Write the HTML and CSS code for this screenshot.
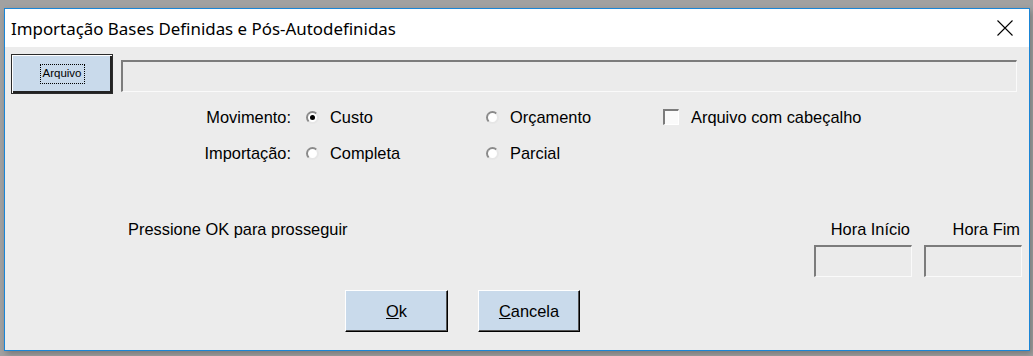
FILE: index.html
```html
<!DOCTYPE html>
<html lang="pt">
<head>
    <meta charset="UTF-8">
    <title>Importação Bases Definidas e Pós-Autodefinidas</title>
    <link rel="stylesheet" href="styles.css">
</head>
<body>
    <div class="window">
        <div class="titlebar">
            <span class="title">Importação Bases Definidas e Pós-Autodefinidas</span>
            <svg class="close" width="16" height="16" viewBox="0 0 16 16">
                <path d="M0.5 0.5 L15.5 15.5 M15.5 0.5 L0.5 15.5" stroke="#000" stroke-width="1.1" fill="none"/>
            </svg>
        </div>

        <div class="content">
            <div class="file-row">
                <button class="btn btn-default"><span class="focus">Arquivo</span></button>
                <div class="field file-path"></div>
            </div>

            <div class="options">
                <span class="label">Movimento:</span>
                <label class="opt"><span class="radio checked"></span>Custo</label>
                <label class="opt"><span class="radio"></span>Orçamento</label>
                <label class="opt"><span class="check"></span>Arquivo com cabeçalho</label>

                <span class="label">Importação:</span>
                <label class="opt"><span class="radio"></span>Completa</label>
                <label class="opt"><span class="radio"></span>Parcial</label>
            </div>

            <div class="status-row">
                <p class="message">Pressione OK para prosseguir</p>
                <div class="times">
                    <div class="time">
                        <span class="time-label">Hora Início</span>
                        <div class="field time-box"></div>
                    </div>
                    <div class="time">
                        <span class="time-label">Hora Fim</span>
                        <div class="field time-box"></div>
                    </div>
                </div>
            </div>

            <div class="actions">
                <button class="btn btn-ok"><u>O</u>k</button>
                <button class="btn btn-cancel"><u>C</u>ancela</button>
            </div>
        </div>
    </div>
</body>
</html>
```

FILE: styles.css
```css
* {
    box-sizing: border-box;
}

body {
    margin: 0;
    height: 356px;
    padding: 8px 0 0 4px;
    background: #a1a1a1;
    font-family: "Liberation Sans", Arial, sans-serif;
    font-size: 16.4px;
    color: #000;
    overflow: hidden;
}

.window {
    width: 1026px;
    height: 343px;
    border: 1px solid #1a85d6;
    background: #ececec;
    display: flex;
    flex-direction: column;
    box-shadow: 2px 3px 6px rgba(0, 0, 0, 0.25);
}

.titlebar {
    height: 38px;
    background: #fff;
    display: flex;
    align-items: center;
    justify-content: space-between;
    padding: 0 16px 0 6px;
}

.title {
    font-family: "Noto Sans", sans-serif;
    font-size: 16.9px;
    margin-top: 1px;
}

.close {
    display: block;
    margin-top: -1px;
}

.content {
    flex: 1;
    display: flex;
    flex-direction: column;
}

/* classic 3D buttons */
.btn {
    font-family: "Liberation Sans", Arial, sans-serif;
    font-size: 16.4px;
    color: #000;
    background: #c9daeb;
    border: 1px solid;
    border-color: #fff #000 #000 #fff;
    box-shadow: inset -1px -1px 0 #555;
    padding: 0;
    cursor: pointer;
}

.btn-default {
    width: 102px;
    height: 40px;
    border: 1px solid #2b2b2b;
    box-shadow: inset 1px 1px 0 #fff, inset -2px -2px 0 #222;
    font-size: 11.5px;
}

.focus {
    display: inline-block;
    border: 1px dotted #000;
    padding: 2px 2px 3px;
    line-height: 13px;
}

.field {
    background: #ebebeb;
    border-style: solid;
    border-width: 2px 1px 1px 2px;
    border-color: #7c7c7c #fafafa #fafafa #7c7c7c;
}

.file-row {
    display: flex;
    align-items: flex-start;
    gap: 8px;
    margin-top: 7px;
    padding: 0 12px 0 6px;
}

.file-path {
    flex: 1;
    height: 32px;
    margin-top: 6px;
}

.options {
    display: grid;
    grid-template-columns: 300px 180px 178px auto;
    grid-auto-rows: 20px;
    row-gap: 16px;
    margin-top: 13px;
}

.label {
    text-align: right;
    padding-right: 14px;
    line-height: 20px;
}

.opt {
    display: flex;
    align-items: center;
    line-height: 20px;
}

.radio {
    position: relative;
    flex: none;
    width: 13px;
    height: 13px;
    margin: 0 11px 0 1px;
    border-radius: 50%;
    background: #fff;
    border: 2px solid;
    border-color: #8a8a8a #e6e6e6 #e6e6e6 #8a8a8a;
}

.radio.checked::after {
    content: "";
    position: absolute;
    left: 2px;
    top: 2px;
    width: 5px;
    height: 5px;
    border-radius: 50%;
    background: #000;
}

.check {
    flex: none;
    width: 16px;
    height: 16px;
    margin-right: 12px;
    background: #fafafa;
    border-style: solid;
    border-width: 2px 1px 1px 2px;
    border-color: #7c7c7c #fff #fff #7c7c7c;
}

.status-row {
    display: flex;
    justify-content: space-between;
    margin-top: 57px;
    padding: 0 7px 0 123px;
}

.message {
    margin: 0;
    line-height: 18px;
}

.times {
    display: flex;
    gap: 12px;
}

.time {
    width: 98px;
    display: flex;
    flex-direction: column;
}

.time-label {
    text-align: right;
    padding-right: 2px;
    line-height: 18px;
}

.time-box {
    height: 32px;
    margin-top: 7px;
}

.actions {
    display: flex;
    gap: 30px;
    margin-top: 13px;
    padding-left: 340px;
}

.btn-ok {
    width: 103px;
    height: 42px;
}

.btn-cancel {
    width: 102px;
    height: 42px;
}
```
